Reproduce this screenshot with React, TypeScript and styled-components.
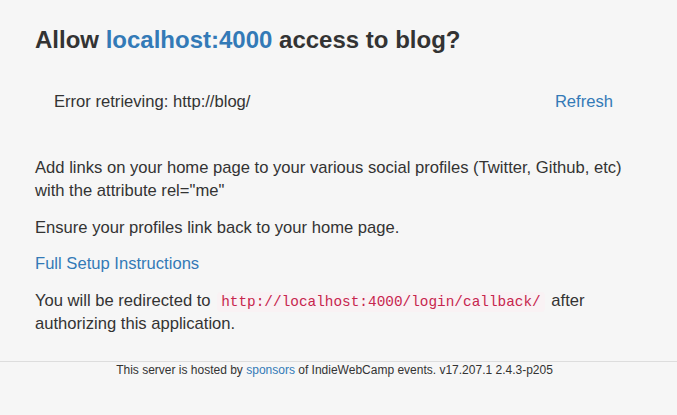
import React from "react";
import styled, { createGlobalStyle } from "styled-components";

const GlobalStyle = createGlobalStyle`
  html, body {
    margin: 0;
    padding: 0;
    background: #f6f6f6;
  }
  body {
    font-family: "Liberation Sans", Arial, sans-serif;
    font-size: 16.6px;
    line-height: 23px;
    color: #333;
  }
`;

const Page = styled.div`
  min-height: 415px;
  display: flex;
  flex-direction: column;
`;

const Main = styled.main`
  padding: 27px 35px 0;
`;

const Title = styled.h2`
  margin: 0 0 37px;
  font-size: 24px;
  font-weight: bold;
  line-height: 1.1;
  color: #333;
`;

const Link = styled.a`
  color: #337ab7;
  text-decoration: none;
`;

const StatusRow = styled.div`
  display: flex;
  justify-content: space-between;
  align-items: center;
  padding: 0 29px 0 19px;
  margin-bottom: 43px;
`;

const Para = styled.p`
  margin: 0 0 13.5px;
`;

const Code = styled.code`
  font-family: "Liberation Mono", "Courier New", monospace;
  font-size: 14.4px;
  line-height: 1;
  padding: 2px 4px;
  margin: 0 2px;
  color: #c7254e;
  background: #f9f2f4;
  border-radius: 4px;
`;

const Footer = styled.footer`
  margin-top: 13px;
  border-top: 1px solid #ddd;
  padding: 1px 8px 0 0;
  text-align: center;
  font-size: 12px;
  line-height: 15px;
`;

export default function App() {
  return (
    <Page>
      <GlobalStyle />
      <Main>
        <Title>
          Allow <Link href="#">localhost:4000</Link> access to blog?
        </Title>
        <StatusRow>
          <span>Error retrieving: http://blog/</span>
          <Link href="#">Refresh</Link>
        </StatusRow>
        <Para>
          Add links on your home page to your various social profiles (Twitter, Github, etc) with the
          attribute rel="me"
        </Para>
        <Para>Ensure your profiles link back to your home page.</Para>
        <Para>
          <Link href="#">Full Setup Instructions</Link>
        </Para>
        <Para>
          You will be redirected to <Code>http://localhost:4000/login/callback/</Code> after authorizing
          this application.
        </Para>
      </Main>
      <Footer>
        This server is hosted by <Link href="#">sponsors</Link> of IndieWebCamp events. v17.207.1
        2.4.3-p205
      </Footer>
    </Page>
  );
}
